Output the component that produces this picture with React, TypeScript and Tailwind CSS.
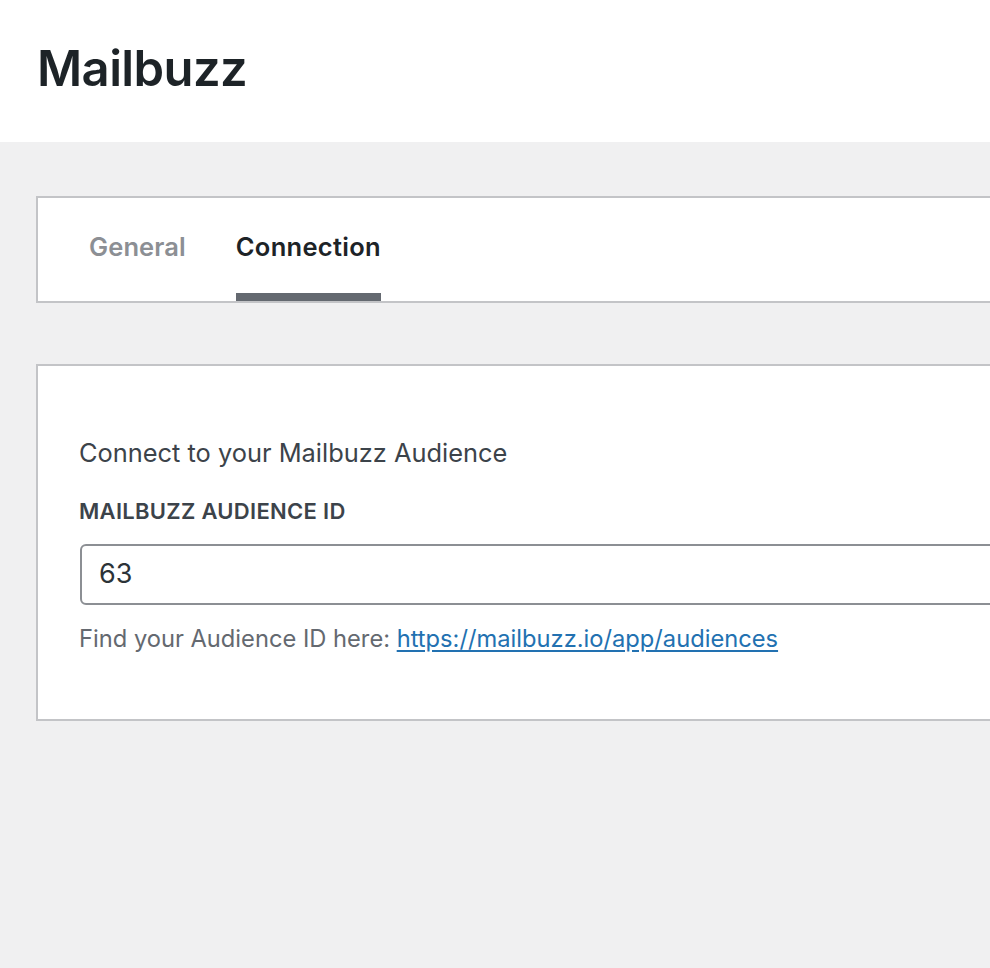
import React from "react";

export default function App() {
  return (
    <div className="w-[990px] h-[968px] overflow-hidden bg-[#f0f0f1]" style={{ fontFamily: "Inter, 'Noto Sans', sans-serif" }}>
      <header className="h-[142px] bg-white flex items-center pl-[37px]">
        <h1 className="text-[49px] font-semibold text-[#1d2327] tracking-[-0.6px] leading-none mt-[-5px]">Mailbuzz</h1>
      </header>
      <div className="pl-[36px] pt-[54px] w-[1200px]">
        <div className="h-[107px] bg-white border-2 border-[#c3c4c7] flex items-stretch pl-[51px] gap-[50px]">
          <div className="flex items-center text-[25.5px] font-semibold text-[#8c8f94] tracking-[0.1px] pb-[5px]">General</div>
          <div className="relative flex items-center text-[25.5px] font-semibold text-[#1d2327] tracking-[0.3px] pb-[5px]">
            Connection
            <div className="absolute left-0 right-0 bottom-0 h-[8px] bg-[#646970]" />
          </div>
        </div>
        <div className="mt-[61px] h-[357px] bg-white border-2 border-[#c3c4c7] pl-[41px] pt-[71px]">
          <p className="text-[25.4px] text-[#3c434a] leading-[32px]">Connect to your Mailbuzz Audience</p>
          <div className="mt-[28px] text-[22px] font-semibold text-[#3c434a] uppercase tracking-[0.3px] leading-[28px]">Mailbuzz Audience ID</div>
          <div className="mt-[19px] ml-[1px] h-[61px] border-2 border-[#8c8f94] rounded-[6px] flex items-center pl-[17px] text-[27px] text-[#2c3338]">
            63
          </div>
          <p className="mt-[18px] text-[23.7px] text-[#646970] leading-[32px]">
            Find your Audience ID here:{" "}
            <a href="#" className="text-[#2271b1] underline underline-offset-[3px]">https://mailbuzz.io/app/audiences</a>
          </p>
        </div>
      </div>
    </div>
  );
}
